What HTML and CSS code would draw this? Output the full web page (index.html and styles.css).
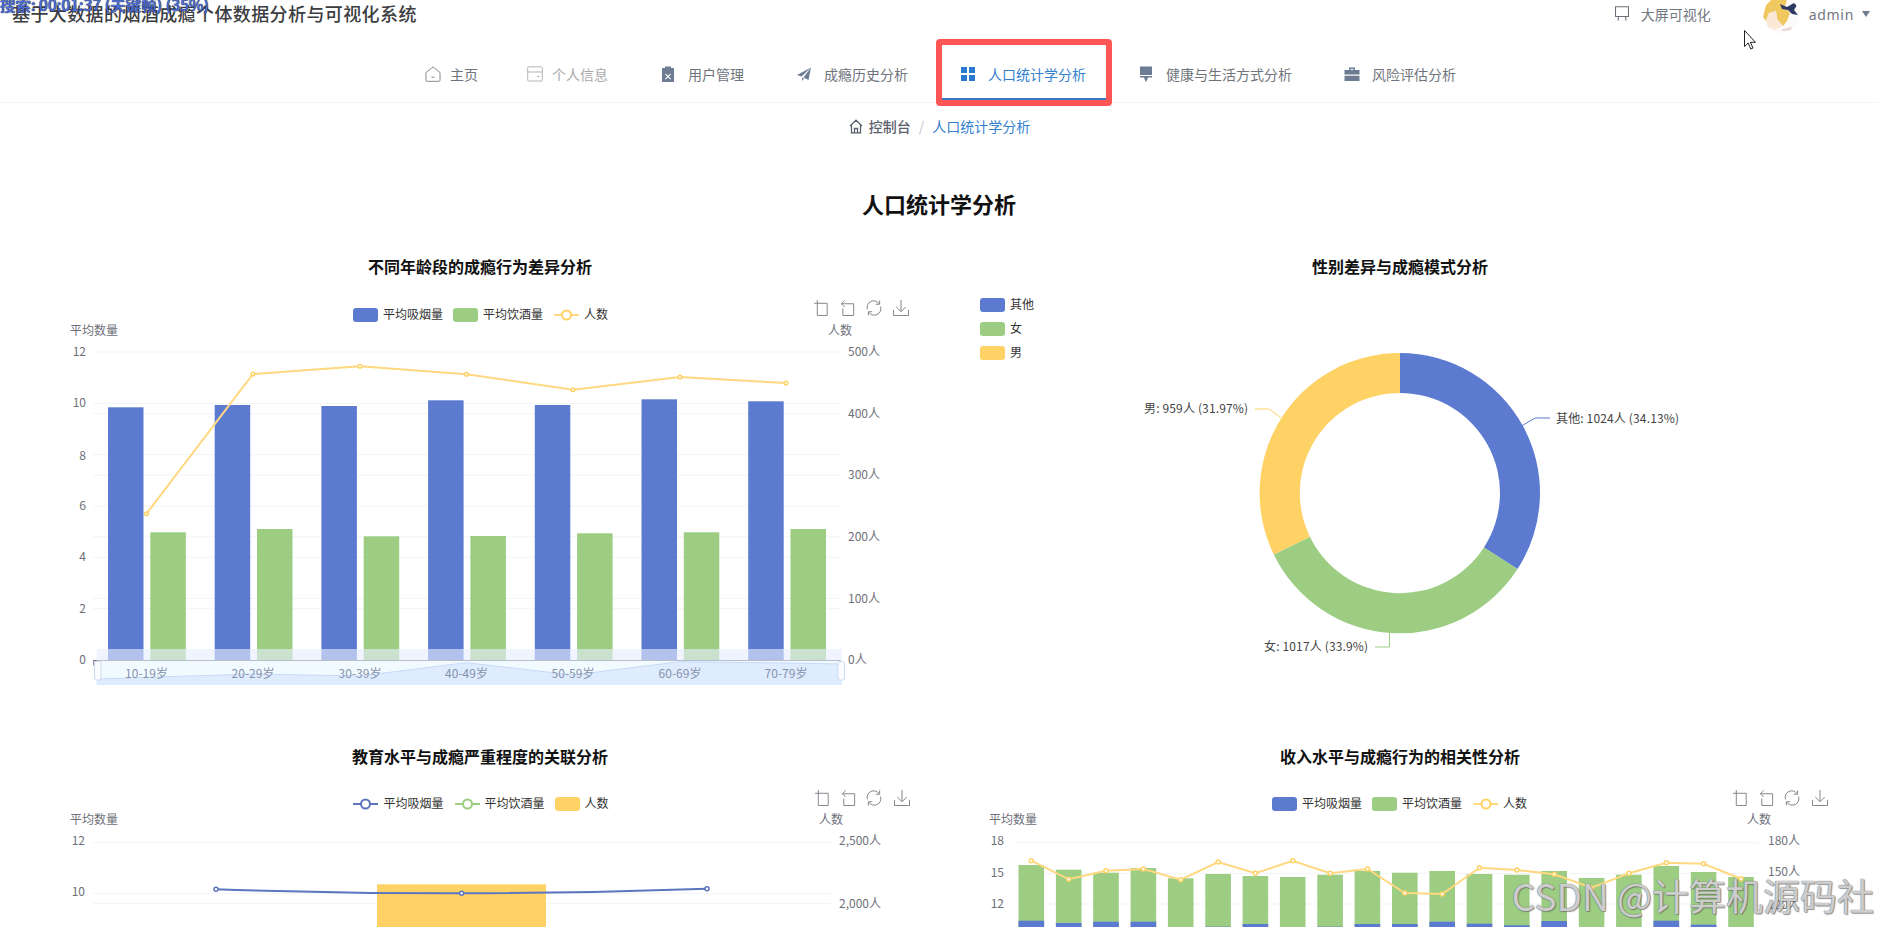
FILE: index.html
```html
<!DOCTYPE html>
<html lang="zh-CN">
<head>
<meta charset="utf-8">
<title>人口统计学分析</title>
<link rel="stylesheet" href="styles.css">
</head>
<body>
<svg class="defs" width="0" height="0" aria-hidden="true">
  <symbol id="tb-zoom" viewBox="0 0 17 17"><path d="M0 3.5H14V16.5M3.5 0V16.5H14"/></symbol>
  <symbol id="tb-back" viewBox="0 0 17 17"><path d="M5 .5L1.5 4 5 7.5M1.5 4H14.5V16.5H3V9"/></symbol>
  <symbol id="tb-refresh" viewBox="0 0 17 17"><path d="M1.5 10A7 7 0 0 1 14 4M14.5 .5V4.5H10.5M15.5 7A7 7 0 0 1 3 13M2.5 16.5V12.5H6.5"/></symbol>
  <symbol id="tb-save" viewBox="0 0 17 17"><path d="M8.5 0V12M3.5 7.5L8.5 12.5 13.5 7.5M.5 10.5V16.5H16.5V10.5"/></symbol>
</svg>

<div class="search-tip">搜索: 00:01:37 (关键帧) (35%)</div>

<header class="topbar">
  <div class="brand">基于大数据的烟酒成瘾个体数据分析与可视化系统</div>
  <div class="top-right">
    <a class="screen-link">
      <svg class="screen-icon" viewBox="0 0 14 15"><path d="M.5.8H13.5V10.5H.5ZM3.5 10.5L3 14.5M10.5 10.5L11 14.5"/></svg>
      <span>大屏可视化</span>
    </a>
    <div class="user">
      <svg class="avatar" viewBox="0 0 36 36">
        <defs><clipPath id="av"><circle cx="18" cy="18" r="18"/></clipPath></defs>
        <g clip-path="url(#av)">
          <rect width="36" height="36" fill="#fdfbf9"/>
          <path d="M0 20L3 8 9 2H24L22 10 27 16 24 24 20 29 14 22 13 14 6 16 3 24Z" fill="#f0c860"/>
          <path d="M3 24L6 16 13 14 14 22 20 29 12 33 5 30Z" fill="#fbe8d6"/>
          <path d="M17 7L24 10 31 6 34 8 31 13 35 18 29 17 25 13 19 12Z" fill="#2c3a62"/>
          <path d="M18 32.500Q24 31 29 30L28 33 20 34Z" fill="#e8d5dc"/>
        </g>
      </svg>
      <span class="user-name">admin</span>
      <span class="caret"></span>
    </div>
  </div>
</header>

<svg class="cursor" viewBox="0 0 12 20"><path d="M.5.5V16.5L4.2 13 6.8 19 9 18 6.4 12.3H11.5Z"/></svg>

<nav class="nav">
  <a class="nav-item nav-item--home">
    <svg class="nav-icon" viewBox="0 0 17 17"><path class="ic-line" d="M1 7L8.500 1 16 7V15A1.300 1.300 0 0 1 14.700 16.300H2.300A1.300 1.300 0 0 1 1 15ZM6.800 11.500Q8.500 13 10.200 11.500"/></svg>
    <span>主页</span>
  </a>
  <a class="nav-item nav-item--info">
    <svg class="nav-icon" viewBox="0 0 16 16"><path class="ic-line ic-line--soft" d="M1.500.8H14.500A.8.8 0 0 1 15.300 1.600V14.200A.8.8 0 0 1 14.500 15H1.500A.8.8 0 0 1 .7 14.200V1.600A.8.8 0 0 1 1.500.8ZM.7 6H15.300M10 10.500H12.500"/></svg>
    <span>个人信息</span>
  </a>
  <a class="nav-item">
    <svg class="nav-icon" viewBox="0 0 16 16"><path class="ic-fill" fill-rule="evenodd" d="M2 2H5V.5H11V2H14V16H2ZM5.800 7.500L8 9.700 10.200 7.500 11 8.300 8.800 10.500 11 12.700 10.200 13.500 8 11.300 5.800 13.500 5 12.700 7.200 10.500 5 8.300Z"/></svg>
    <span>用户管理</span>
  </a>
  <a class="nav-item">
    <svg class="nav-icon" viewBox="0 0 16 16"><path class="ic-fill" d="M15 1.500L12.500 14 7.500 11.500 15 1.500 5.500 10.500 1 9ZM6 11.500L8 12.500 6.300 15Z"/></svg>
    <span>成瘾历史分析</span>
  </a>
  <a class="nav-item nav-item--active">
    <svg class="nav-icon" viewBox="0 0 16 16"><path d="M1 1H7V7H1ZM9 1H15V7H9ZM1 9H7V15H1ZM9 9H15V15H9Z"/></svg>
    <span>人口统计学分析</span>
  </a>
  <a class="nav-item">
    <svg class="nav-icon" viewBox="0 0 16 16"><path class="ic-fill" d="M2 .5H14V9H2ZM2 10H14V11.500H10L8.500 15.500H7.500L6 11.500H2Z"/></svg>
    <span>健康与生活方式分析</span>
  </a>
  <a class="nav-item">
    <svg class="nav-icon" viewBox="0 0 16 16"><path class="ic-fill" fill-rule="evenodd" d="M5 4V1.500H11V4H15.500V8.500H.5V4ZM6.500 4H9.500V3H6.500ZM.5 9.800H15.500V15H.5Z"/></svg>
    <span>风险评估分析</span>
  </a>
</nav>

<div class="crumbs">
  <svg class="crumb-home" viewBox="0 0 14 15"><path d="M1 7L7 1.200 13 7M2.500 6V13.800H11.500V6M5.500 13.800V9.500H8.500V13.800"/></svg>
  <span class="crumb-root">控制台</span>
  <span class="crumb-sep">/</span>
  <span class="crumb-page">人口统计学分析</span>
</div>

<h1 class="page-title">人口统计学分析</h1>

<main class="charts">
  <section class="chart-card">
    <h2 class="chart-title">不同年龄段的成瘾行为差异分析</h2>
    <svg class="chart" viewBox="20 284 920 450">
      <g class="grid">
        <path d="M93 352H840M93 403.300H840M93 454.700H840M93 506H840M93 557.300H840M93 608.700H840"/>
        <path d="M93 413.600H840M93 475.200H840M93 536.800H840M93 598.400H840"/>
      </g>
      <g class="s-blue">
        <rect x="108" y="407.300" width="35.500" height="252.700"/><rect x="214.700" y="405" width="35.500" height="255"/><rect x="321.400" y="406" width="35.500" height="254"/><rect x="428.100" y="400.300" width="35.500" height="259.700"/><rect x="534.800" y="405" width="35.500" height="255"/><rect x="641.500" y="399.300" width="35.500" height="260.700"/><rect x="748.200" y="401.300" width="35.500" height="258.700"/>
      </g>
      <g class="s-green">
        <rect x="150.300" y="532.300" width="35.500" height="127.700"/><rect x="257" y="529" width="35.500" height="131"/><rect x="363.700" y="536.300" width="35.500" height="123.700"/><rect x="470.400" y="536" width="35.500" height="124"/><rect x="577.100" y="533.300" width="35.500" height="126.700"/><rect x="683.800" y="532.300" width="35.500" height="127.700"/><rect x="790.500" y="529" width="35.500" height="131"/>
      </g>
      <polyline class="line-yellow" points="146.500,513.700 253,374 360,366.300 466.500,374.300 573,389.700 680,377 786,383"/>
      <g class="dots-yellow">
        <circle cx="146.500" cy="513.700" r="1.800"/><circle cx="253" cy="374" r="1.800"/><circle cx="360" cy="366.300" r="1.800"/><circle cx="466.500" cy="374.300" r="1.800"/><circle cx="573" cy="389.700" r="1.800"/><circle cx="680" cy="377" r="1.800"/><circle cx="786" cy="383" r="1.800"/>
      </g>
      <path class="axis" d="M93 660.500H840M93.800 660V665.500M200 660V665.500M307.600 660V665.500M413.600 660V665.500M520 660V665.500M627.500 660V665.500M733.500 660V665.500M840 660V665.500"/>

      <rect class="dz-band" x="96.700" y="649" width="745.300" height="12"/>
      <rect class="dz-track" x="96.700" y="661" width="745.300" height="24"/>
      <path class="dz-area" d="M96.700 679L253 674 360 676 466.500 662.700 573 675 680 661.700 786 663 842 664V685H96.700Z"/>
      <path class="dz-line" d="M96.700 679L253 674 360 676 466.500 662.700 573 675 680 661.700 786 663 842 664"/>
      <rect class="dz-handle" x="94.500" y="661.500" width="6.500" height="18.500" rx="2"/>
      <rect class="dz-handle" x="838" y="661.500" width="6.500" height="18.500" rx="2"/>
      <g class="tick-x">
        <text x="146.500" y="677.500">10-19岁</text><text x="253" y="677.500">20-29岁</text><text x="360" y="677.500">30-39岁</text><text x="466.500" y="677.500">40-49岁</text><text x="573" y="677.500">50-59岁</text><text x="680" y="677.500">60-69岁</text><text x="786" y="677.500">70-79岁</text>
      </g>
      <g class="legend">
        <rect class="s-blue" x="353" y="308" width="25" height="14" rx="3"/><text x="383" y="318.500">平均吸烟量</text>
        <rect class="s-green" x="453" y="308" width="25" height="14" rx="3"/><text x="483" y="318.500">平均饮酒量</text>
        <path class="line-yellow" d="M554 315H579"/><circle class="marker-yellow" cx="566.500" cy="315" r="4.500"/><text x="584" y="318.500">人数</text>
      </g>
      <g class="toolbox">
        <use href="#tb-zoom" x="814" y="300" width="16" height="16"/><use href="#tb-back" x="840" y="300" width="16" height="16"/><use href="#tb-refresh" x="866" y="300" width="16" height="16"/><use href="#tb-save" x="893" y="300" width="16" height="16"/>
      </g>
      <g class="tick-y">
        <text class="name" x="70" y="334.500">平均数量</text><text class="name" x="828" y="334.500">人数</text>
        <g class="end">
          <text x="86" y="355.500">12</text><text x="86" y="406.500">10</text><text x="86" y="459.500">8</text><text x="86" y="510">6</text><text x="86" y="560.500">4</text><text x="86" y="613">2</text><text x="86" y="663.500">0</text>
        </g>
        <text x="848" y="355.500">500人</text><text x="848" y="418">400人</text><text x="848" y="478.500">300人</text><text x="848" y="541">200人</text><text x="848" y="603">100人</text><text x="848" y="663.500">0人</text>
      </g>
    </svg>
  </section>

  <section class="chart-card">
    <h2 class="chart-title">性别差异与成瘾模式分析</h2>
    <svg class="chart" viewBox="940 284 920 450">
      <path class="s-blue" d="M1400 353A140 140 0 0 1 1517.500 569.100L1483.900 547.400A100 100 0 0 0 1400 393Z"/>
      <path class="s-green" d="M1517.500 569.100A140 140 0 0 1 1273.800 554.400L1309.900 536.700A100 100 0 0 0 1483.900 547.400Z"/>
      <path class="s-yellow" d="M1273.800 554.400A140 140 0 0 1 1400 353V393A100 100 0 0 0 1309.900 536.700Z"/>
      <path class="lead lead-blue" d="M1522 425.700L1535 418H1550"/>
      <path class="lead lead-green" d="M1389.500 632.700V647H1375"/>
      <path class="lead lead-yellow" d="M1281 417.700L1269 409H1255"/>
      <g class="pie-label">
        <text x="1556" y="422.500">其他: 1024人 (34.13%)</text>
        <text x="1144" y="412.500">男: 959人 (31.97%)</text>
        <text x="1264" y="651">女: 1017人 (33.9%)</text>
      </g>
      <g class="legend">
        <rect class="s-blue" x="980" y="298" width="25" height="14" rx="3"/><text x="1010" y="308.500">其他</text>
        <rect class="s-green" x="980" y="322" width="25" height="14" rx="3"/><text x="1010" y="332.500">女</text>
        <rect class="s-yellow" x="980" y="346" width="25" height="14" rx="3"/><text x="1010" y="356.500">男</text>
      </g>
    </svg>
  </section>

  <section class="chart-card">
    <h2 class="chart-title">教育水平与成瘾严重程度的关联分析</h2>
    <svg class="chart chart--cut" viewBox="20 774 920 153">
      <g class="grid"><path d="M93 842.700H831M93 893.300H831M93 903.300H831"/></g>
      <rect class="s-yellow" x="377" y="884.300" width="169" height="60"/>
      <path class="line-blue" d="M216 889.300Q340 893.500 461.600 893.300T707 888.700"/>
      <g class="dots-blue"><circle cx="216" cy="889.300" r="2"/><circle cx="461.600" cy="893.300" r="2"/><circle cx="707" cy="888.700" r="2"/></g>
      <g class="legend">
        <path class="line-blue" d="M353 804H378"/><circle class="marker-blue" cx="365.500" cy="804" r="4.500"/><text x="383.500" y="807.500">平均吸烟量</text>
        <path class="line-green" d="M455 804H480"/><circle class="marker-green" cx="467.500" cy="804" r="4.500"/><text x="484.500" y="807.500">平均饮酒量</text>
        <rect class="s-yellow" x="555" y="797" width="25" height="14" rx="3"/><text x="584.500" y="807.500">人数</text>
      </g>
      <g class="toolbox">
        <use href="#tb-zoom" x="815" y="790" width="16" height="16"/><use href="#tb-back" x="841" y="790" width="16" height="16"/><use href="#tb-refresh" x="866" y="790" width="16" height="16"/><use href="#tb-save" x="894" y="790" width="16" height="16"/>
      </g>
      <g class="tick-y">
        <text class="name" x="70" y="823.500">平均数量</text><text class="name" x="819" y="823.500">人数</text>
        <g class="end"><text x="85" y="845">12</text><text x="85" y="896">10</text></g>
        <text x="839" y="845">2,500人</text><text x="839" y="907.500">2,000人</text>
      </g>
    </svg>
  </section>

  <section class="chart-card">
    <h2 class="chart-title">收入水平与成瘾行为的相关性分析</h2>
    <svg class="chart chart--cut" viewBox="940 774 920 153">
      <g class="grid"><path d="M1014 842.700H1758M1014 873.300H1758M1014 904H1758"/></g>
      <g class="s-green">
        <rect x="1018.500" y="865" width="25.600" height="70"/><rect x="1055.900" y="869.700" width="25.600" height="70"/><rect x="1093.200" y="872.700" width="25.600" height="70"/><rect x="1130.600" y="868" width="25.600" height="70"/><rect x="1167.900" y="878.300" width="25.600" height="70"/><rect x="1205.300" y="874" width="25.600" height="70"/><rect x="1242.600" y="876" width="25.600" height="70"/><rect x="1279.900" y="877" width="25.600" height="70"/><rect x="1317.300" y="874.700" width="25.600" height="70"/><rect x="1354.600" y="871" width="25.600" height="70"/><rect x="1392" y="872.700" width="25.600" height="70"/><rect x="1429.400" y="871" width="25.600" height="70"/><rect x="1466.700" y="874" width="25.600" height="70"/><rect x="1504" y="874.700" width="25.600" height="70"/><rect x="1541.400" y="871" width="25.600" height="70"/><rect x="1578.800" y="878" width="25.600" height="70"/><rect x="1616.100" y="874.700" width="25.600" height="70"/><rect x="1653.500" y="866" width="25.600" height="70"/><rect x="1690.800" y="872" width="25.600" height="70"/><rect x="1728.200" y="877" width="25.600" height="70"/>
      </g>
      <g class="s-blue">
        <rect x="1018.500" y="920.700" width="25.600" height="14"/><rect x="1055.900" y="923" width="25.600" height="14"/><rect x="1093.200" y="921.700" width="25.600" height="14"/><rect x="1130.600" y="921.700" width="25.600" height="14"/><rect x="1205.300" y="926.700" width="25.600" height="14"/><rect x="1242.600" y="924" width="25.600" height="14"/><rect x="1317.300" y="926.700" width="25.600" height="14"/><rect x="1354.600" y="924" width="25.600" height="14"/><rect x="1392" y="924" width="25.600" height="14"/><rect x="1429.400" y="921.700" width="25.600" height="14"/><rect x="1466.700" y="923.700" width="25.600" height="14"/><rect x="1504" y="925.300" width="25.600" height="14"/><rect x="1541.400" y="921" width="25.600" height="14"/><rect x="1653.500" y="920.700" width="25.600" height="14"/><rect x="1690.800" y="924.700" width="25.600" height="14"/>
      </g>
      <polyline class="line-yellow" points="1031.300,860.700 1068.700,879.300 1106,870.700 1143.400,869 1180.700,879.700 1218.100,862 1255.400,873.300 1292.800,860.700 1330.100,873.300 1367.500,869 1404.800,893 1442.200,894 1479.500,867.700 1516.900,870 1554.200,874.300 1591.600,887.700 1628.900,873.300 1666.300,862.700 1703.600,863.700 1741,878.700"/>
      <g class="dots-yellow">
        <circle cx="1031.300" cy="860.700" r="2"/><circle cx="1068.700" cy="879.300" r="2"/><circle cx="1106" cy="870.700" r="2"/><circle cx="1143.400" cy="869" r="2"/><circle cx="1180.700" cy="879.700" r="2"/><circle cx="1218.100" cy="862" r="2"/><circle cx="1255.400" cy="873.300" r="2"/><circle cx="1292.800" cy="860.700" r="2"/><circle cx="1330.100" cy="873.300" r="2"/><circle cx="1367.500" cy="869" r="2"/><circle cx="1404.800" cy="893" r="2"/><circle cx="1442.200" cy="894" r="2"/><circle cx="1479.500" cy="867.700" r="2"/><circle cx="1516.900" cy="870" r="2"/><circle cx="1554.200" cy="874.300" r="2"/><circle cx="1591.600" cy="887.700" r="2"/><circle cx="1628.900" cy="873.300" r="2"/><circle cx="1666.300" cy="862.700" r="2"/><circle cx="1703.600" cy="863.700" r="2"/><circle cx="1741" cy="878.700" r="2"/>
      </g>
      <g class="legend">
        <rect class="s-blue" x="1272" y="797" width="25" height="14" rx="3"/><text x="1302" y="807.500">平均吸烟量</text>
        <rect class="s-green" x="1372" y="797" width="25" height="14" rx="3"/><text x="1402" y="807.500">平均饮酒量</text>
        <path class="line-yellow" d="M1473.500 804H1498.500"/><circle class="marker-yellow" cx="1486" cy="804" r="4.500"/><text x="1503" y="807.500">人数</text>
      </g>
      <g class="toolbox">
        <use href="#tb-zoom" x="1733" y="790" width="16" height="16"/><use href="#tb-back" x="1759" y="790" width="16" height="16"/><use href="#tb-refresh" x="1784" y="790" width="16" height="16"/><use href="#tb-save" x="1812" y="790" width="16" height="16"/>
      </g>
      <g class="tick-y">
        <text class="name" x="989" y="823.500">平均数量</text><text class="name" x="1747" y="823.500">人数</text>
        <g class="end"><text x="1004" y="845">18</text><text x="1004" y="876.500">15</text><text x="1004" y="907.500">12</text></g>
        <text x="1768" y="845">180人</text><text x="1768" y="875.500">150人</text><text x="1768" y="909">120人</text>
      </g>
    </svg>
  </section>
</main>

<div class="watermark">CSDN @计算机源码社</div>
</body>
</html>
```
FILE: styles.css
```css
* { box-sizing: border-box; }
html, body { margin: 0; height: 927px; overflow: hidden; background: #fff; }
body {
  position: relative;
  font-family: "Noto Sans CJK SC", "Liberation Sans", sans-serif;
  color: #333;
}
.defs { position: absolute; }

.topbar {
  height: 30px;
  padding: 0 8px 3px 12px;
  display: flex;
  justify-content: space-between;
  align-items: center;
}
.brand { font-size: 18px; font-weight: 500; letter-spacing: .4px; line-height: 27px; color: #3b3d42; }
.top-right { display: flex; align-items: center; }
.screen-link { display: flex; align-items: center; gap: 12px; font-size: 14px; color: #73777f; }
.screen-icon { width: 14px; height: 15px; fill: none; stroke: #6c7078; stroke-width: 1.1; }
.user { display: flex; align-items: center; margin-left: 52px; }
.avatar { width: 36px; height: 36px; margin-top: 3px; }
.user-name { margin-left: 10px; font-size: 14px; letter-spacing: .7px; color: #73777f; font-family: "Noto Sans", sans-serif; padding-top: 1px; }
.caret {
  margin-left: 8px;
  border-left: 4px solid transparent;
  border-right: 4px solid transparent;
  border-top: 6px solid #6f7c92;
}
.cursor {
  position: absolute;
  left: 1744px;
  top: 30px;
  width: 12px;
  height: 20px;
  fill: #fff;
  stroke: #222;
  stroke-width: 1;
}
.search-tip {
  position: absolute;
  left: 0;
  top: -7px;
  font-size: 15.5px;
  font-weight: 500;
  white-space: nowrap;
  color: #4f6fd8;
  text-shadow: 0 0 1px #1d2440, 0 0 1px #1d2440;
}

.nav {
  height: 73px;
  padding: 9px 0 0 5px;
  display: flex;
  justify-content: center;
  align-items: flex-start;
  border-bottom: 1px solid #f4f4f5;
}
.nav-item {
  height: 61px;
  padding: 8px 20px 0 18px;
  margin-left: 14px;
  display: flex;
  align-items: center;
  gap: 12px;
  font-size: 14px;
  color: #6f747c;
  position: relative;
}
.nav-item:first-child { margin-left: 0; }
.nav-item--home { gap: 9px; }
.nav-item--info { margin-left: 11px; gap: 9px; color: #a9a9ab; }
.nav-icon { width: 16px; height: 16px; flex: none; }
.ic-line { fill: none; stroke: #7f8389; stroke-width: 1; }
.ic-line--soft { stroke: #b4b5b7; }
.ic-fill { fill: #6d7b93; }
.nav-item--active { color: #3480cf; }
.nav-item--active .nav-icon { fill: #2a7ad0; }
.nav-item--active::before {
  content: "";
  position: absolute;
  left: 0;
  right: 0;
  bottom: 0;
  height: 2px;
  background: #3b79c4;
}
.nav-item--active::after {
  content: "";
  position: absolute;
  inset: 0 -6px -6px;
  border: 6px solid #ff5555;
  border-radius: 4px;
}

.crumbs {
  height: 50px;
  padding: 0 0 4px 1px;
  display: flex;
  justify-content: center;
  align-items: center;
  font-size: 14px;
}
.crumb-home { width: 14px; height: 15px; margin-right: 6px; fill: none; stroke: #5a6270; stroke-width: 1.3; }
.crumb-root { font-weight: 500; color: #5b626e; }
.crumb-sep { margin: 0 8px; color: #c4c6ca; }
.crumb-page { color: #3480cf; }

.page-title {
  margin: 31px 0 0;
  height: 66px;
  text-align: center;
  font-size: 22px;
  line-height: 38px;
  font-weight: 700;
  color: #111;
}

.charts {
  padding: 0 18px 0 20px;
  display: grid;
  grid-template-columns: 920px 920px;
  gap: 6px 0;
}
.chart-title {
  margin: 0;
  height: 34px;
  text-align: center;
  font-size: 16px;
  line-height: 32px;
  font-weight: 700;
  color: #111;
}
.chart { display: block; width: 920px; height: 450px; }
.chart--cut { height: 153px; }
.chart text { font-family: "Noto Sans CJK SC", "Liberation Sans", sans-serif; font-size: 12px; }

.grid path { fill: none; stroke: #f2f3f7; stroke-width: 1; }
.s-blue { fill: #5c7bd0; }
.s-green { fill: #9ccd82; }
.s-yellow { fill: #ffd266; }
.line-yellow { fill: none; stroke: #ffd880; stroke-width: 2; }
.line-blue { fill: none; stroke: #5b75bf; stroke-width: 2; }
.line-green { fill: none; stroke: #9ccd82; stroke-width: 2; }
.dots-yellow circle { fill: #fff; stroke: #ffd266; stroke-width: 1.5; }
.dots-blue circle { fill: #fff; stroke: #5b75bf; stroke-width: 1.5; }
.marker-yellow { fill: #fff; stroke: #ffd266; stroke-width: 2; }
.marker-blue { fill: #fff; stroke: #5b75bf; stroke-width: 2; }
.marker-green { fill: #fff; stroke: #9ccd82; stroke-width: 2; }
.axis { fill: none; stroke: #6e7079; stroke-width: 1; }
.dz-band { fill: rgba(230, 238, 254, .62); }
.dz-track { fill: #f1faff; }
.dz-area { fill: #deecfe; }
.dz-line { fill: none; stroke: #c8daf8; stroke-width: 1; }
.dz-handle { fill: #fbfcff; stroke: #cdd9f2; stroke-width: 1; }
.tick-x text { fill: #8792ad; text-anchor: middle; }
.legend text { fill: #333; }
.toolbox use { fill: none; stroke: #7c7f85; stroke-width: 1; }
.tick-y text { fill: #6e7079; }
.tick-y .end text { text-anchor: end; }
.lead { fill: none; stroke-width: 1; }
.lead-blue { stroke: #5c7bd0; }
.lead-green { stroke: #9ccd82; }
.lead-yellow { stroke: #ffd266; }
.pie-label text { fill: #444; letter-spacing: .15px; }

.watermark {
  position: absolute;
  right: 4px;
  bottom: 12px;
  font-size: 37px;
  line-height: 40px;
  white-space: nowrap;
  color: rgba(240, 240, 240, .72);
  text-shadow: 0 0 1px #777, 0 0 1px #777, 1px 1px 1px rgba(90, 90, 90, .6);
}
```
